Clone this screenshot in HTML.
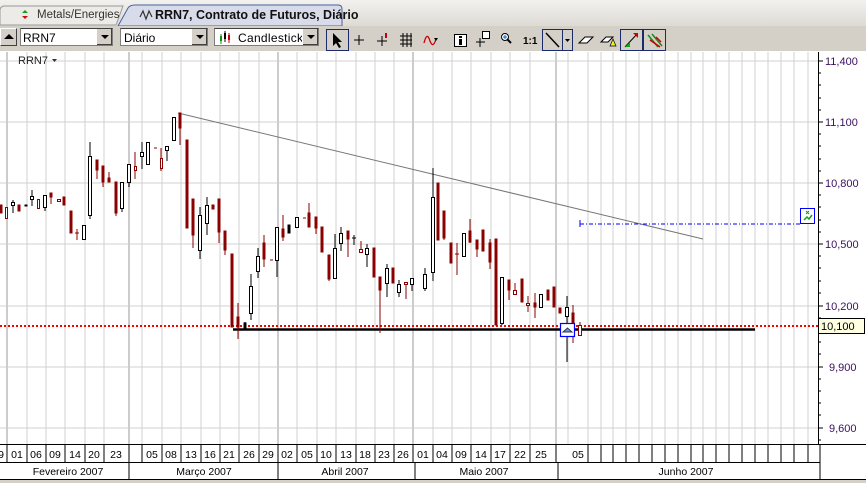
<!DOCTYPE html>
<html><head><meta charset="utf-8"><style>
html,body{margin:0;padding:0;width:866px;height:483px;overflow:hidden;background:#d4d0c8;font-family:"Liberation Sans",sans-serif}
.abs{position:absolute}
.combo{position:absolute;top:28px;height:18px;background:#fff;border:1px solid #7f7f7f;border-top-color:#404040;font-size:12px;line-height:18px;box-sizing:border-box}
.dd{position:absolute;right:0;top:0;width:15px;height:16px;background:#d4d0c8;border-left:1px solid #fff;box-shadow:inset -1px -1px #404040}
.dd:after{content:"";position:absolute;left:4px;top:6px;border-left:4px solid transparent;border-right:4px solid transparent;border-top:4px solid #000}
</style></head><body>
<div class="abs" style="left:0;top:0;width:866px;height:26px;background:linear-gradient(#f2f1ee,#dedbd5)"></div>
<svg class="abs" style="left:0;top:0" width="866" height="52">
<path d="M0 25 L0 10 Q0 7 4 6 L123 6 L116 25 Z" fill="#ecebe7" stroke="#9a9a9a"/>
<path d="M118 26 L128 8 Q130 5 135 5 L338 5 Q342 5 342 9 L342 26 Z" fill="#d8dcea" stroke="#4a5ea0"/>
<path d="M22 13 l3 -3 l3 3z" fill="#1a9a1a"/><path d="M22 16 l3 3 l3 -3z" fill="#c01010"/>
<path d="M140 17 l3 -6 l3 8 l3 -8 l3 6" fill="none" stroke="#333" stroke-width="1.2"/>
<rect x="0" y="26" width="866" height="25" fill="#d4d0c8"/>
</svg>
<div class="abs" style="left:37px;top:9px;font-size:11.5px;color:#333">Metals/Energies</div>
<div class="abs" style="left:155px;top:8px;font-size:12.5px;font-weight:bold;color:#111">RRN7, Contrato de Futuros, Diário</div>
<div class="abs" style="left:0;top:28px;width:17px;height:18px;background:#d4d0c8;border:1px solid #fff;border-right-color:#404040;border-bottom-color:#404040;box-sizing:border-box"></div>
<div class="abs" style="left:4px;top:34px;border-left:5px solid transparent;border-right:5px solid transparent;border-bottom:5px solid #000"></div>
<div class="combo" style="left:20px;width:93px;padding-left:2px">RRN7<div class="dd"></div></div>
<div class="combo" style="left:120px;width:88px;padding-left:3px">Diário<div class="dd"></div></div>
<div class="combo" style="left:214px;width:105px;padding-left:23px;letter-spacing:.3px">Candlestick<div class="dd"></div></div>
<svg class="abs" style="left:0;top:26px" width="866" height="26">
<g stroke-width="1"><line x1="221" y1="8" x2="221" y2="18" stroke="#1a8a1a"/><rect x="220" y="10" width="2" height="5" fill="#1a8a1a"/><line x1="225" y1="5" x2="225" y2="16" stroke="#000"/><rect x="224" y="7" width="2" height="6" fill="#000"/><line x1="229" y1="7" x2="229" y2="17" stroke="#c00"/><rect x="228" y="9" width="2" height="5" fill="#c00"/></g>
<rect x="326.5" y="3.5" width="22" height="21" fill="#d4d0c8" stroke="#1a2a6a"/>
<path d="M333 7 L333 20 L336 17 L339 22 L341 21 L338 16 L342 16 Z" fill="#000"/>
<path d="M359 9 v10 M354 14 h10" stroke="#000"/>
<path d="M382 10 v10 M377 15 h10" stroke="#000"/><rect x="385" y="7" width="2" height="5" fill="#c00"/>
<path d="M400 10h12M400 14h12M400 18h12M403 7v14M407 7v14M411 7v14" stroke="#000" stroke-width="1"/>
<path d="M424 17 q3 -12 6 -2 q3 8 6 -2" fill="none" stroke="#c00" stroke-width="1.3"/><path d="M434 12 l4 0 l-2 3z" fill="#000"/>
<rect x="454.5" y="8.5" width="12" height="12" fill="#fff" stroke="#000"/><rect x="459" y="10" width="3" height="2" fill="#000"/><rect x="459" y="13" width="3" height="6" fill="#000"/>
<path d="M476 16 h9 M480 12 v9" stroke="#000"/><rect x="482.5" y="5.5" width="7" height="7" fill="#fff" stroke="#000"/>
<circle cx="505" cy="11" r="3.5" fill="#fff" stroke="#000"/><path d="M507 13 l4 4" stroke="#000" stroke-width="2"/><path d="M503 11h4M505 9v4" stroke="#06c"/>
<text x="523" y="18" font-size="10" font-weight="bold" font-family="Liberation Sans">1:1</text>
<rect x="542.5" y="3.5" width="20" height="21" fill="#d4d0c8" stroke="#1a2a6a"/><rect x="562.5" y="3.5" width="10" height="21" fill="#d4d0c8" stroke="#1a2a6a"/>
<path d="M546 7 L559 21" stroke="#000" stroke-width="1.5"/><path d="M565 13 l5 0 l-2.5 3z" fill="#000"/>
<path d="M579 17 l6 -6 h8 l-6 6 z" fill="#fff" stroke="#000"/>
<path d="M601 16 l5 -5 h7 l-5 5z" fill="#fff" stroke="#000"/><path d="M610 20 l3 -7 l3 7z" fill="#ee2" stroke="#000" stroke-width=".7"/>
<rect x="620.5" y="3.5" width="22" height="21" fill="#d4d0c8" stroke="#1a2a6a"/><path d="M625 21 L637 8" stroke="#000"/><path d="M633 7h5v5z" fill="#c00"/><path d="M625 21h5v-5z" fill="#1a1"/>
<rect x="643.5" y="3.5" width="22" height="21" fill="#d4d0c8" stroke="#1a2a6a"/><path d="M648 9l10 12M652 8l10 12" stroke="#1a8a1a" stroke-width="1.5"/><path d="M650 14l10 7M656 11l5 5" stroke="#c00" stroke-width="1.5"/>
</svg>
<svg class="abs" style="left:0;top:51px" width="866" height="432" viewBox="0 51 866 432">
<rect x="0" y="51" width="866" height="432" fill="#fff"/>
<g stroke="#d0d0d0" stroke-width="1">
<path d="M27 52V444M46 52V444M65 52V444M85 52V444M104 52V444M142 52V444M162 52V444M181 52V444M201 52V444M220 52V444M239 52V444M259 52V444M297 52V444M317 52V444M336 52V444M356 52V444M375 52V444M394 52V444M433 52V444M452 52V444M471 52V444M491 52V444M510 52V444M530 52V444M568 52V444M588 52V444M601 52V444M613 52V444M626 52V444M639 52V444M652 52V444M665 52V444M678 52V444M691 52V444M703 52V444M716 52V444M729 52V444M742 52V444M755 52V444M768 52V444M781 52V444M794 52V444M808 52V444"/>
<path d="M0 61H818M0 122H818M0 183H818M0 244H818M0 306H818M0 367H818M0 428H818"/>
</g>
<g stroke="#cccccc" stroke-width="2"><path d="M7 52V444M129 52V444M278 52V444M413 52V444M556 52V444"/></g>
<line x1="178" y1="113" x2="703" y2="239" stroke="#777" stroke-width="1"/>
<line x1="0" y1="326" x2="818" y2="326" stroke="#f00" stroke-width="2" stroke-dasharray="2,2"/>
<line x1="233" y1="329.5" x2="755" y2="329.5" stroke="#000" stroke-width="2.5"/>
<line x1="580" y1="224" x2="800" y2="224" stroke="#00f" stroke-width="1" stroke-dasharray="4,2,1,2"/>
<line x1="580" y1="220" x2="580" y2="227" stroke="#00f"/>
<rect x="800.5" y="208.5" width="14" height="15" fill="#fff" stroke="#00f"/>
<path d="M804 220 l3 -3 l2 2 l3 -4" fill="none" stroke="#1a9a1a" stroke-width="1.5"/><path d="M806 211l3 3M809 211l-3 3" stroke="#1a9a1a"/>
<g stroke="#8b0000" fill="#8b0000">
<rect x="-1" y="205" width="3" height="8"/>
<rect x="5.5" y="207.5" width="2" height="11" fill="#fff"/>
<rect x="18" y="205" width="2" height="6"/>
<rect x="37.5" y="199.5" width="2" height="9" fill="#fff"/>
<path d="M51 193V204"/><rect x="50" y="193" width="2" height="4"/>
<rect x="57.5" y="199.5" width="3" height="2" fill="#fff"/>
<rect x="63" y="197" width="2" height="8"/>
<rect x="70" y="211" width="2" height="22"/>
<path d="M77 229V240M75 233h4" fill="none"/>
<path d="M97 160V179"/><rect x="96" y="160" width="2" height="10"/>
<path d="M103 166V187"/><rect x="102" y="166" width="2" height="16"/>
<path d="M109 172V182"/><rect x="108" y="178" width="2" height="4"/>
<path d="M116 182V216"/><rect x="115" y="182" width="2" height="31"/>
<path d="M135 152V179"/><rect x="134.5" y="166.5" width="2" height="4" fill="#fff"/>
<path d="M154 148h3"/>
<path d="M161 148V171"/><rect x="160.5" y="158.5" width="2" height="10" fill="#fff"/>
<path d="M180 113V145"/><rect x="179" y="113" width="2" height="15"/>
<rect x="186" y="140" width="2" height="88"/><path d="M187 140V228"/>
<path d="M193 199V248"/><rect x="192" y="199" width="2" height="36"/>
<rect x="212" y="205" width="2" height="4"/>
<path d="M219 199V243"/><rect x="218" y="199" width="2" height="33"/>
<path d="M225 231V255"/><rect x="224" y="231" width="2" height="19"/>
<rect x="231" y="254" width="2" height="73"/>
<path d="M238 303V339"/><rect x="237" y="317" width="2" height="10"/>
<path d="M264 235V267"/><rect x="263" y="243" width="2" height="16"/>
<path d="M270 260h3"/>
<path d="M283 215V241"/><rect x="282" y="229" width="2" height="8"/>
<path d="M303 218h3"/>
<path d="M309 203V227"/><rect x="308" y="213" width="2" height="14"/>
<path d="M316 217V234"/><rect x="315" y="217" width="2" height="11"/>
<rect x="321" y="227" width="2" height="25"/>
<path d="M329 255V281"/><rect x="328" y="255" width="2" height="24"/>
<path d="M348 231V257"/><rect x="347" y="231" width="2" height="8"/>
<path d="M361 241V252"/><rect x="359.5" y="249.5" width="3" height="3" fill="#fff"/>
<rect x="373" y="248" width="2" height="29"/>
<path d="M380 277V333"/><rect x="379" y="277" width="2" height="13"/>
<rect x="392" y="268" width="2" height="15"/>
<path d="M406 282V299"/><rect x="404.5" y="282.5" width="3" height="2" fill="#fff"/>
<rect x="437" y="183" width="2" height="57"/>
<path d="M444 211V240"/><rect x="443" y="211" width="2" height="27"/>
<rect x="450" y="243" width="2" height="20"/>
<path d="M457 243V275M455 254h4" fill="none"/>
<path d="M470 219V243"/><rect x="469" y="231" width="2" height="11"/>
<path d="M477 240V257"/><rect x="476" y="240" width="2" height="9"/>
<rect x="482" y="230" width="2" height="21"/>
<path d="M490 239V269"/><rect x="489" y="243" width="2" height="19"/>
<rect x="495" y="239" width="2" height="86"/>
<path d="M509 280V300"/><rect x="508" y="280" width="2" height="10"/>
<path d="M515 283V294"/><rect x="513.5" y="290.5" width="3" height="4" fill="#fff"/>
<rect x="521" y="279" width="2" height="23"/>
<path d="M528 296V312"/><rect x="526.5" y="303.5" width="3" height="2" fill="#fff"/>
<path d="M535 293V318"/><rect x="534" y="303" width="2" height="4"/>
<rect x="547" y="290" width="2" height="10"/>
<rect x="553" y="287" width="2" height="20"/>
<rect x="559" y="308" width="2" height="5"/>
<path d="M573 305V343"/><rect x="572" y="313" width="2" height="14"/>
<path d="M580 322V336"/><rect x="578.5" y="325.5" width="3" height="10" fill="#fff"/>
</g>
<g stroke="#000" fill="#fff">
<path d="M13 200V213"/><rect x="11.5" y="202.5" width="3" height="3"/>
<rect x="25" y="205" width="2" height="1" fill="#000"/>
<path d="M32 190V206"/><rect x="30.5" y="196.5" width="3" height="3"/>
<path d="M45 195V211"/><rect x="43.5" y="195.5" width="3" height="12"/>
<path d="M84 225V240"/><rect x="82.5" y="225.5" width="3" height="14"/>
<path d="M90 142V219"/><rect x="88.5" y="156.5" width="3" height="59"/>
<path d="M122 182V212"/><rect x="120.5" y="182.5" width="3" height="26"/>
<path d="M129 164V187"/><rect x="127.5" y="164.5" width="3" height="18"/>
<path d="M142 142V169"/><rect x="140.5" y="152.5" width="3" height="4"/>
<rect x="146.5" y="142.5" width="3" height="22"/>
<path d="M167 146V161"/><rect x="165.5" y="146.5" width="3" height="4"/>
<rect x="172.5" y="117.5" width="3" height="23"/>
<path d="M200 207V259"/><rect x="198.5" y="215.5" width="3" height="35"/>
<path d="M207 197V235"/><rect x="205.5" y="205.5" width="3" height="18"/>
<path d="M245 322V329"/><rect x="244" y="323" width="2" height="6" fill="#000"/>
<path d="M251 274V320"/><rect x="249.5" y="286.5" width="3" height="27"/>
<path d="M258 248V278"/><rect x="256.5" y="256.5" width="3" height="15"/>
<path d="M277 227V277"/><rect x="275.5" y="227.5" width="3" height="33"/>
<rect x="288" y="225" width="2" height="8" fill="#000"/>
<rect x="295.5" y="217.5" width="3" height="10"/>
<path d="M335 234V278"/><rect x="333.5" y="248.5" width="3" height="30"/>
<path d="M341 227V251"/><rect x="339.5" y="233.5" width="3" height="10"/>
<path d="M354 235V245M352 238h4"/>
<path d="M367 244V267"/><rect x="365.5" y="248.5" width="3" height="6"/>
<path d="M387 264V297"/><rect x="385.5" y="268.5" width="3" height="15"/>
<path d="M399 280V297"/><rect x="397.5" y="284.5" width="3" height="8"/>
<path d="M412 278V291"/><rect x="410.5" y="278.5" width="3" height="6"/>
<path d="M425 268V291"/><rect x="423.5" y="274.5" width="3" height="14"/>
<path d="M433 168V281"/><rect x="431.5" y="197.5" width="3" height="75"/>
<rect x="462.5" y="233.5" width="3" height="23"/>
<path d="M502 277V325"/><rect x="500.5" y="277.5" width="3" height="46"/>
<path d="M541 294V307"/><rect x="539.5" y="294.5" width="3" height="13"/>
<path d="M567 296V362"/><rect x="565.5" y="307.5" width="3" height="9"/>
</g>
<rect x="560.5" y="323.5" width="14" height="13" fill="#fff" stroke="#00f" stroke-width="1.2"/>
<path d="M563 332 l4.5 -4 l4.5 4z" fill="#6a9ad0" stroke="#335"/>
<rect x="818" y="51" width="48" height="393" fill="#fff"/>
<line x1="818.5" y1="52" x2="818.5" y2="444" stroke="#000"/>
<g stroke="#000"><path d="M818 61h5M818 73h3M818 85h3M818 98h3M818 110h3M818 122h5M818 134h3M818 146h3M818 159h3M818 171h3M818 183h5M818 195h3M818 207h3M818 220h3M818 232h3M818 244h5M818 256h3M818 268h3M818 281h3M818 293h3M818 306h5M818 318h3M818 342h3M818 354h3M818 367h5M818 379h3M818 391h3M818 403h3M818 415h3M818 428h5M818 440h3"/></g>
<g font-family="Liberation Sans" font-size="11" fill="#3a1060">
<text x="825" y="65">11,400</text><text x="825" y="126">11,100</text><text x="825" y="187">10,800</text><text x="825" y="248">10,500</text><text x="825" y="310">10,200</text><text x="829" y="371">9,900</text><text x="829" y="432">9,600</text>
</g>
<rect x="818.5" y="318.5" width="46" height="15" fill="#ffffe1" stroke="#000"/>
<text x="821" y="330" font-family="Liberation Sans" font-size="11" fill="#000">10,100</text>
<text x="18" y="64" font-family="Liberation Sans" font-size="11" fill="#222">RRN7</text><path d="M52 59h5l-2.5 3z" fill="#333"/>
<rect x="0" y="444" width="866" height="36" fill="#fff"/>
<path d="M0 444.5H866M0 462.5H820M0 479.5H866" stroke="#000"/>
<g stroke="#000"><path d="M7 444V462M27 444V462M46 444V462M65 444V462M85 444V462M104 444V462M129 444V479M142 444V462M162 444V462M181 444V462M201 444V462M220 444V462M239 444V462M259 444V462M278 444V479M297 444V462M317 444V462M336 444V462M356 444V462M375 444V462M394 444V462M413 444V462M415 462V479M433 444V462M452 444V462M471 444V462M491 444V462M510 444V462M530 444V462M556 444V462M558 462V479M588 444V462M601 444V462M613 444V462M626 444V462M639 444V462M652 444V462M665 444V462M678 444V462M691 444V462M703 444V462M716 444V462M729 444V462M742 444V462M755 444V462M768 444V462M781 444V462M794 444V462M808 444V462M820 444V479"/></g>
<g font-family="Liberation Sans" font-size="10.5" fill="#000" text-anchor="middle">
<text x="1" y="458">9</text><text x="17" y="458">01</text><text x="36" y="458">06</text><text x="55" y="458">09</text><text x="75" y="458">14</text><text x="94" y="458">20</text><text x="116" y="458">23</text>
<text x="152" y="458">05</text><text x="171" y="458">08</text><text x="191" y="458">13</text><text x="210" y="458">16</text><text x="229" y="458">21</text><text x="249" y="458">26</text><text x="268" y="458">29</text>
<text x="287" y="458">02</text><text x="307" y="458">05</text><text x="326" y="458">10</text><text x="346" y="458">13</text><text x="365" y="458">18</text><text x="384" y="458">23</text><text x="403" y="458">26</text>
<text x="423" y="458">01</text><text x="442" y="458">04</text><text x="461" y="458">09</text><text x="481" y="458">14</text><text x="500" y="458">17</text><text x="520" y="458">22</text><text x="541" y="458">25</text>
<text x="578" y="458">05</text>
<text x="68" y="475">Fevereiro 2007</text><text x="204" y="475">Março 2007</text><text x="345" y="475">Abril 2007</text><text x="484" y="475">Maio 2007</text><text x="686" y="475">Junho 2007</text>
</g>
<rect x="0" y="480" width="866" height="3" fill="#d4d0c8"/>
</svg>
</body></html>
